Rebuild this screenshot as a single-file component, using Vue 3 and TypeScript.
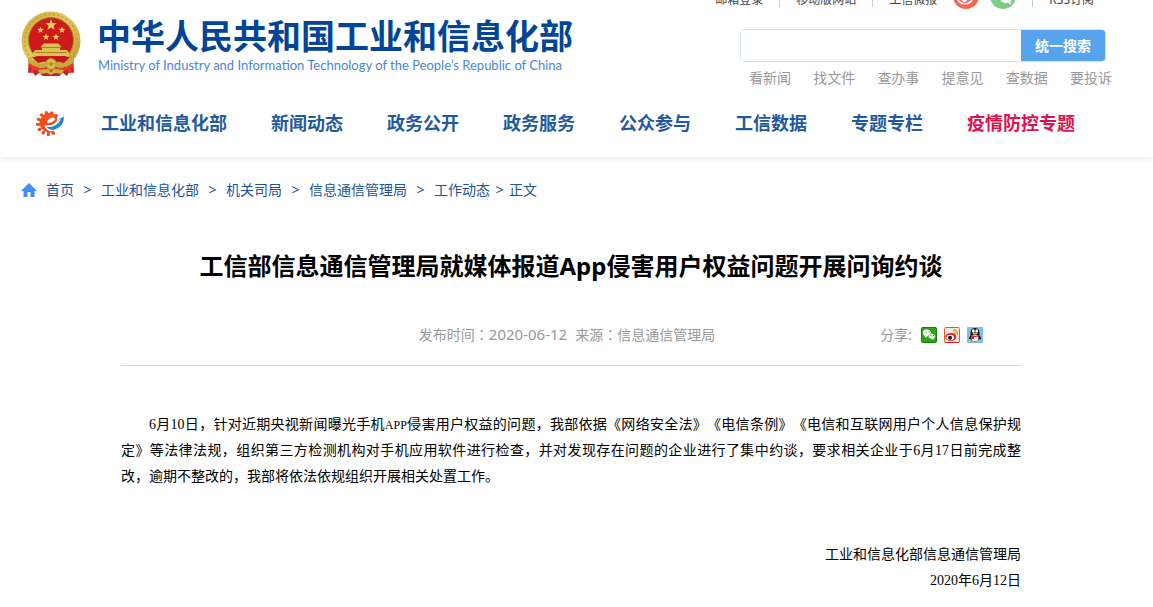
<script setup lang="ts">
interface NavItem { label: string; hot?: boolean }

const navItems: NavItem[] = [
  { label: '工业和信息化部' },
  { label: '新闻动态' },
  { label: '政务公开' },
  { label: '政务服务' },
  { label: '公众参与' },
  { label: '工信数据' },
  { label: '专题专栏' },
  { label: '疫情防控专题', hot: true },
]

const quickLinks: string[] = ['看新闻', '找文件', '查办事', '提意见', '查数据', '要投诉']
const crumbs: string[] = ['工业和信息化部', '机关司局', '信息通信管理局', '工作动态']

function star(cx: number, cy: number, r: number): string {
  const pts: string[] = []
  for (let i = 0; i < 10; i++) {
    const rad = i % 2 === 0 ? r : r * 0.42
    const a = (Math.PI / 5) * i - Math.PI / 2
    pts.push(`${(cx + rad * Math.cos(a)).toFixed(2)},${(cy + rad * Math.sin(a)).toFixed(2)}`)
  }
  return pts.join(' ')
}

const stars: string[] = [
  star(31, 14, 6), star(20.5, 19, 3.6), star(42, 19, 3.6), star(26, 26, 3.6), star(36, 26, 3.6),
]

const teeth: number[] = [55, 83, 111, 139, 167, 195, 223, 251, 279, 307]
</script>

<template>
  <div class="page" lang="zh-CN">
    <header class="header">
      <div class="masthead">
        <a class="brand" href="#">
          <svg class="emblem" viewBox="0 0 62 66" aria-hidden="true">
            <defs>
              <linearGradient id="gold" x1="0" y1="0" x2="1" y2="1">
                <stop offset="0" stop-color="#c9a63a" />
                <stop offset=".45" stop-color="#e3cb5e" />
                <stop offset="1" stop-color="#b99530" />
              </linearGradient>
            </defs>
            <path d="M9 46 L8 62 L13 61 L15 65 L19 62 L23 65 L39 65 L43 62 L47 65 L49 61 L54 62 L53 46Z" fill="#c91f20" />
            <circle cx="31" cy="30" r="29.500" fill="url(#gold)" />
            <circle cx="31" cy="30" r="26.500" fill="none" stroke="#c3a13a" stroke-width="1.500" stroke-dasharray="2 2.500" />
            <circle cx="31" cy="29" r="22.500" fill="#cf1a1b" stroke="#a98022" stroke-width="1" />
            <polygon v-for="(p, i) in stars" :key="i" :points="p" fill="#e6cf60" />
            <path d="M22 34 L24 32.500 H38 L40 34 L41 36 H21Z M22 36 H40 V39 H22Z M15 39 H47 L49 42 V45 H13 V42Z" fill="#dcc253" />
            <path d="M21 36.500 H41 M15 41.500 H47" stroke="#ac8026" stroke-width="1" />
            <path d="M12 46 H50 L44 52 L31 49 L18 52Z" fill="#c4191b" />
            <circle cx="31" cy="53" r="5.500" fill="#d8bd4c" stroke="#a9801f" />
            <circle cx="31" cy="53" r="2" fill="#b48c2a" />
            <path d="M8 46 Q17 56 29 51 L27 55 Q15 59 8 51Z M54 46 Q45 56 33 51 L35 55 Q47 59 54 51Z" fill="#c8a93d" />
            <path d="M9 54 Q18 61 27 57 M53 54 Q44 61 35 57 M13 56 L12 62 M49 56 L50 62" stroke="#e73830" stroke-width="3" fill="none" />
            <path d="M18 59 L27 58 L31 61 L35 58 L44 59 L42 63 L35 62 L31 64 L27 62 L20 63Z" fill="#d0ae42" />
          </svg>
          <span class="brand-text">
            <span class="brand-cn">中华人民共和国工业和信息化部</span>
            <span class="brand-en" lang="en">Ministry of Industry and Information Technology of the People’s Republic of China</span>
          </span>
        </a>

        <div class="tools">
          <div class="topbar">
            <a href="#">邮箱登录</a>
            <i class="sep"></i>
            <a href="#">移动版网站</a>
            <i class="sep warm"></i>
            <a href="#">工信微报</a>
            <a class="round weibo" href="#" aria-label="微博">
              <svg viewBox="0 0 26 26" aria-hidden="true">
                <circle cx="13" cy="13" r="13" fill="#fb6450" />
                <ellipse cx="12" cy="16" rx="8" ry="5.500" fill="#fff" />
                <ellipse cx="12" cy="16" rx="5.800" ry="4" fill="#fb6450" />
                <circle cx="11.500" cy="16.500" r="2.600" fill="#fff" />
                <path d="M16 7 Q21 7 20 13" stroke="#fff" stroke-width="2" fill="none" />
              </svg>
            </a>
            <a class="round" href="#" aria-label="微信">
              <svg viewBox="0 0 26 26" aria-hidden="true">
                <circle cx="13" cy="13" r="13" fill="#7dcc88" />
                <ellipse cx="10" cy="11" rx="6" ry="5" fill="#fff" />
                <ellipse cx="16" cy="16" rx="6" ry="4.500" fill="#fff" stroke="#7dcc88" />
                <path d="M18 19 L21 22 L20 17Z" fill="#fff" />
              </svg>
            </a>
            <i class="sep green"></i>
            <a href="#">RSS订阅</a>
          </div>
          <form class="search" @submit.prevent>
            <input type="text" aria-label="搜索" />
            <button type="submit">统一搜索</button>
          </form>
          <div class="quick">
            <a v-for="q in quickLinks" :key="q" href="#">{{ q }}</a>
          </div>
        </div>
      </div>

      <nav class="nav">
        <svg class="gear" viewBox="0 0 28 26" aria-hidden="true">
          <rect
            v-for="t in teeth"
            :key="t"
            x="11" y="1" width="3" height="4" rx="1"
            fill="#ee4d1c"
            :transform="`rotate(${t + 98} 12.5 13.5)`"
          />
          <path d="M22.500 8 A10 9.800 0 1 0 18 21.500 Q13 22 9.500 18 Q6 13 10 8.500 Q15 4 20 5.500 Q22 6.500 22.500 8Z" fill="#ee4d1c" />
          <path d="M9 17 Q5.500 12 10.500 8 Q16 4 20 6 Q23 9 19 13 Q15 16 9.500 15.500Z" fill="#ee4d1c" />
          <path d="M11 13 Q11 9 16 7.500 Q20 7 18.500 10 Q16 13 11 13Z" fill="#fff" />
          <path d="M9 15.500 Q17 16.500 21.500 12 Q22 15 19 17.500 Q15 20 11 19Z" fill="#fff" />
          <path d="M10.500 17 Q20 18 25 9.500 L22.500 9.500 L28 6.500 Q28 16 19 19.500 Q14 21 10.500 17Z" fill="#1685d1" />
        </svg>
        <a v-for="item in navItems" :key="item.label" href="#" :class="{ hot: item.hot }">{{ item.label }}</a>
      </nav>
    </header>

    <nav class="crumbs" aria-label="面包屑">
      <svg class="home" viewBox="0 0 16 14" aria-hidden="true">
        <path d="M8 0 L16 8 H13.500 V14 H9.500 V9 H6.500 V14 H2.500 V8 H0Z" fill="#3f8ef5" />
      </svg>
      <a class="first" href="#">首页</a>
      <template v-for="c in crumbs" :key="c">
        <span class="arrow">&gt;</span>
        <a href="#">{{ c }}</a>
      </template>
      <span class="arrow tight">&gt;</span>
      <span>正文</span>
    </nav>

    <main class="article">
      <h1>工信部信息通信管理局就媒体报道App侵害用户权益问题开展问询约谈</h1>
      <div class="meta">
        <p class="source">
          <span>发布时间</span><span class="colon" lang="zh-TW">：</span><time datetime="2020-06-12">2020-06-12</time><span class="from">来源</span><span class="colon" lang="zh-TW">：</span><span>信息通信管理局</span>
        </p>
        <div class="share">
          <span class="share-label">分享:</span>
          <a href="#" aria-label="微信">
            <svg viewBox="0 0 16 16" aria-hidden="true">
              <rect x=".5" y=".5" width="15" height="15" rx="1" fill="#28a80e" stroke="#158009" />
              <path d="M2 6.500 A4 3.300 0 1 1 7 9 L4 10.500 L4 9 Q2 8 2 6.500Z" fill="#fff" />
              <path d="M7.500 9.500 A3.400 2.800 0 1 1 13 11.500 L13.500 13 L11 12.200 Q7.500 12 7.500 9.500Z" fill="#fff" stroke="#28a80e" stroke-width=".6" />
              <path d="M4.500 5 h1 M7.500 5 h1 M9.500 8.500 h1 M12 8.500 h1" stroke="#28a80e" />
            </svg>
          </a>
          <a href="#" aria-label="微博">
            <svg viewBox="0 0 16 16" aria-hidden="true">
              <rect x=".5" y=".5" width="15" height="15" rx="1" fill="#eee9e4" stroke="#e5641e" />
              <path d="M1 15.500 H15" stroke="#c71920" />
              <ellipse cx="6.800" cy="10" rx="5.500" ry="4" fill="#e31920" />
              <ellipse cx="6.300" cy="10.500" rx="3.800" ry="2.800" fill="#fff" />
              <circle cx="6" cy="10.700" r="2" fill="#111" />
              <path d="M9 3 Q14 3 13.500 8 M9.500 5.500 Q11.500 5.500 11.300 7.500" stroke="#f0961b" stroke-width="1.300" fill="none" />
            </svg>
          </a>
          <a href="#" aria-label="QQ">
            <svg viewBox="0 0 16 16" aria-hidden="true">
              <rect width="16" height="16" rx="1" fill="#7dc0ee" />
              <path d="M3.500 8 Q3 1 8 1 Q13 1 12.500 8 L14.500 12 L12.500 12 Q11 15 8 15 Q5 15 3.500 12 L1.500 12Z" fill="#111" />
              <ellipse cx="8" cy="11" rx="3.500" ry="3.500" fill="#fff" />
              <ellipse cx="6.300" cy="4" rx="1.400" ry="1.800" fill="#fff" />
              <ellipse cx="9.700" cy="4" rx="1.400" ry="1.800" fill="#fff" />
              <ellipse cx="8" cy="6.300" rx="2.800" ry=".9" fill="#f8a81b" />
              <path d="M3.500 7.500 Q8 10 12.500 7.500 L12.500 9 Q8 11 3.500 9Z M5 9 h2 v3 h-2Z" fill="#e92020" />
              <path d="M2 15 Q4 11.500 7.500 15Z M14 15 Q12 11.500 8.500 15Z" fill="#f8a81b" />
            </svg>
          </a>
        </div>
      </div>

      <div class="body">
        <p>6月10日，针对近期央视新闻曝光手机<span class="latin">APP</span>侵害用户权益的问题，我部依据《网络安全法》《电信条例》《电信和互联网用户个人信息保护规定》等法律法规，组织第三方检测机构对手机应用软件进行检查，并对发现存在问题的企业进行了集中约谈，要求相关企业于6月17日前完成整改，逾期不整改的，我部将依法依规组织开展相关处置工作。</p>
        <div class="sign">
          <p>工业和信息化部信息通信管理局</p>
          <p>2020年6月12日</p>
        </div>
      </div>
    </main>
  </div>
</template>

<style>
body {
  margin: 0;
  background: #fff;
}
</style>

<style scoped>
.page {
  font-family: "Noto Sans", "Noto Sans CJK SC", sans-serif;
  font-size: 14px;
  line-height: 20px;
  color: #000;
  overflow: hidden;
}
a {
  color: inherit;
  text-decoration: none;
}
p, h1 {
  margin: 0;
}
svg {
  display: block;
}
.header {
  padding-bottom: 20px;
  box-shadow: 0 2px 6px #e6eff6;
}
.masthead {
  display: flex;
  justify-content: space-between;
  align-items: flex-start;
  height: 96px;
  padding: 0 41px 0 20px;
}
.brand {
  display: flex;
  gap: 15px;
  padding-top: 11px;
}
.emblem {
  width: 62px;
  height: 66px;
}
.brand-text {
  display: flex;
  flex-direction: column;
  font-family: "Noto Sans CJK SC", sans-serif;
  white-space: nowrap;
}
.brand-cn {
  font-size: 34px;
  line-height: 44px;
  margin-top: 2px;
  font-weight: 700;
  color: #004596;
}
.brand-en {
  font-family: Lato, sans-serif;
  font-size: 13px;
  line-height: 16px;
  padding-left: 1px;
  color: #4a87d2;
}
.tools {
  display: flex;
  flex-direction: column;
  width: 372px;
}
.topbar {
  display: flex;
  align-items: flex-end;
  justify-content: flex-end;
  gap: 16px;
  height: 26px;
  margin-top: -17px;
  padding-right: 18px;
  font-size: 12px;
  line-height: 18px;
  color: #444;
  white-space: nowrap;
}
.topbar > * {
  flex-shrink: 0;
}
.sep {
  width: 1px;
  height: 14px;
  margin-bottom: 2px;
  background: #c5cbdc;
}
.sep.warm {
  background: #e2c9bc;
}
.sep.green {
  background: #b4d6b2;
}
.round {
  width: 26px;
  height: 26px;
}
.weibo {
  margin-right: -5px;
}
.search {
  display: flex;
  box-sizing: border-box;
  width: 366px;
  height: 33px;
  margin-top: 20px;
  border: 1px solid #d3e2ef;
  border-radius: 4px;
  overflow: hidden;
}
.search input {
  flex: 1;
  min-width: 0;
  border: 0;
  padding: 0 8px;
  outline: none;
  font: inherit;
}
.search button {
  width: 84px;
  border: 0;
  padding: 0;
  background: #56a5ec;
  color: #fff;
  font: inherit;
  font-weight: 700;
}
.quick {
  display: flex;
  justify-content: space-between;
  margin-top: 6px;
  padding-left: 9px;
  color: #999;
}
.nav {
  display: flex;
  align-items: center;
  gap: 44px;
  padding-left: 36px;
  padding-top: 13px;
  font-size: 18px;
  line-height: 28px;
  font-weight: 700;
  color: #1f5a9f;
  white-space: nowrap;
}
.gear {
  flex-shrink: 0;
  width: 28px;
  height: 26px;
  margin-right: -7px;
}
.nav .hot {
  color: #de1150;
}
.crumbs {
  display: flex;
  align-items: center;
  padding: 23px 21px 0;
  color: #1b5498;
  white-space: nowrap;
}
.home {
  width: 16px;
  height: 14px;
}
.first {
  margin-left: 9px;
}
.arrow {
  width: 27px;
  text-align: center;
}
.arrow.tight {
  width: 19px;
}
.article {
  max-width: 900px;
  margin: 0 auto;
  padding: 48px 11px 0 0;
}
h1 {
  font-size: 24px;
  line-height: 36px;
  font-weight: 700;
  text-align: center;
}
.meta {
  display: grid;
  grid-template-columns: 1fr auto 1fr;
  align-items: center;
  margin-top: 40px;
  padding-bottom: 20px;
  border-bottom: 1px solid #d8d8d8;
  color: #999;
}
.source {
  grid-column: 2;
  padding-right: 8px;
}
.source time {
  font-size: 15px;
}
.colon {
  font-family: "Noto Sans CJK TC", sans-serif;
}
.from {
  margin-left: 8px;
}
.share {
  display: flex;
  align-items: center;
  justify-self: end;
  gap: 7px;
  padding-right: 38px;
}
.share svg {
  width: 16px;
  height: 16px;
}
.share-label {
  margin-right: 2px;
}
.body {
  margin-top: 46px;
  font-family: "Liberation Serif", "Noto Sans CJK SC", serif;
  line-height: 26px;
  text-spacing-trim: space-all;
}
.body > p {
  text-indent: 28px;
  text-align: justify;
}
.latin {
  font-size: 12px;
}
.sign {
  margin-top: 52px;
  text-align: right;
}
</style>
